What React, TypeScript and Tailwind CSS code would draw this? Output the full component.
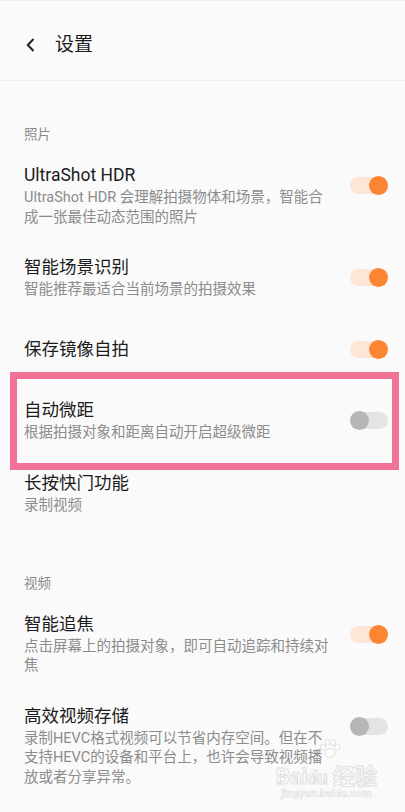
import React from 'react';

type Item = {
  title: string;
  desc?: string;
  on?: boolean;
  highlight?: boolean;
};

const photoItems: Item[] = [
  { title: 'UltraShot HDR', desc: 'UltraShot HDR 会理解拍摄物体和场景，智能合成一张最佳动态范围的照片', on: true },
  { title: '智能场景识别', desc: '智能推荐最适合当前场景的拍摄效果', on: true },
  { title: '保存镜像自拍', on: true },
  { title: '自动微距', desc: '根据拍摄对象和距离自动开启超级微距', on: false, highlight: true },
  { title: '长按快门功能', desc: '录制视频' },
];

const videoItems: Item[] = [
  { title: '智能追焦', desc: '点击屏幕上的拍摄对象，即可自动追踪和持续对焦', on: true },
  {
    title: '高效视频存储',
    desc: '录制HEVC格式视频可以节省内存空间。但在不支持HEVC的设备和平台上，也许会导致视频播放或者分享异常。',
    on: false,
  },
];

const Toggle: React.FC<{ on: boolean }> = ({ on }) => (
  <div className="relative w-[38px] h-[19px] flex items-center">
    <div className={on ? 'w-full h-[17px] rounded-full bg-[#fde6d8]' : 'w-full h-[17px] rounded-full bg-[#e4e4e4]'} />
    <div
      className={
        on
          ? 'absolute right-0 top-0 w-[19px] h-[19px] rounded-full bg-[#fb8532]'
          : 'absolute left-0 top-0 w-[19px] h-[19px] rounded-full bg-[#b6b6b6]'
      }
    />
  </div>
);

const Row: React.FC<{ item: Item }> = ({ item }) => (
  <div className="relative flex items-center min-h-[70px] py-[14px] pl-6 pr-[17px]">
    {/* annotation box */}
    {item.highlight && (
      <div className="absolute left-[10px] right-[6px] top-[-12px] bottom-[-13px] border-[7px] border-[#f27197]" />
    )}
    <div className="flex w-full items-start justify-between">
      <div className="w-[306px]">
        <div className="text-[17.5px] leading-[25px] text-[#1c1c1c]">{item.title}</div>
        {item.desc && (
          <div className="text-[14.5px] leading-[19.5px] text-[#8c8c8c]">{item.desc}</div>
        )}
      </div>
      {item.on !== undefined && (
        <div className={item.desc ? 'h-[45px] flex items-center' : 'h-[25px] flex items-center'}>
          <Toggle on={item.on} />
        </div>
      )}
    </div>
  </div>
);

const SectionHeader: React.FC<{ label: string }> = ({ label }) => (
  <div className="pt-[43px] pb-[5px] pl-6 text-[13.5px] leading-[20px] text-[#8a8a8a]">{label}</div>
);

export default function App() {
  return (
    <div
      className="relative w-[405px] h-[812px] overflow-hidden bg-[#fafafa] border-t border-[#ececec]"
      style={{ fontFamily: 'Roboto, "Noto Sans CJK SC", sans-serif' }}
    >
      {/* Header */}
      <div className="h-[80px] flex items-center pl-[26px] border-b border-[#ececec]">
        <svg width="9" height="14" viewBox="0 0 9 14" className="mt-[8px]">
          <path d="M7.5 1 L1.8 7 L7.5 13" fill="none" stroke="#222" strokeWidth="2" />
        </svg>
        <span className="ml-[20px] mt-[10px] text-[19px] text-[#1c1c1c]">设置</span>
      </div>

      <SectionHeader label="照片" />
      {photoItems.map((it) => (
        <Row key={it.title} item={it} />
      ))}

      <SectionHeader label="视频" />
      {videoItems.map((it) => (
        <Row key={it.title} item={it} />
      ))}

      {/* watermark */}
      <svg
        width="24"
        height="20"
        viewBox="0 0 24 20"
        className="absolute left-[318px] top-[738px] opacity-60 pointer-events-none"
      >
        <g fill="white" stroke="#cfcfcf" strokeWidth="1">
          <ellipse cx="5" cy="8" rx="2.5" ry="3" />
          <ellipse cx="9.5" cy="3.5" rx="2.5" ry="3" />
          <ellipse cx="15" cy="3.5" rx="2.5" ry="3" />
          <ellipse cx="19.5" cy="8" rx="2.5" ry="3" />
          <ellipse cx="12" cy="14" rx="5" ry="4.5" />
        </g>
      </svg>
      <div className="absolute right-[28px] bottom-[12px] flex flex-col items-center opacity-60 pointer-events-none">
        <div className="text-[22px] leading-[20px] font-bold text-white" style={{ WebkitTextStroke: '1px #cfcfcf' }}>
          Bai<span className="text-[18px]">du</span> 经验
        </div>
        <div className="text-[11px] leading-[12px] font-bold text-white" style={{ WebkitTextStroke: '0.6px #cfcfcf' }}>
          jingyan.baidu.com
        </div>
      </div>
    </div>
  );
}
